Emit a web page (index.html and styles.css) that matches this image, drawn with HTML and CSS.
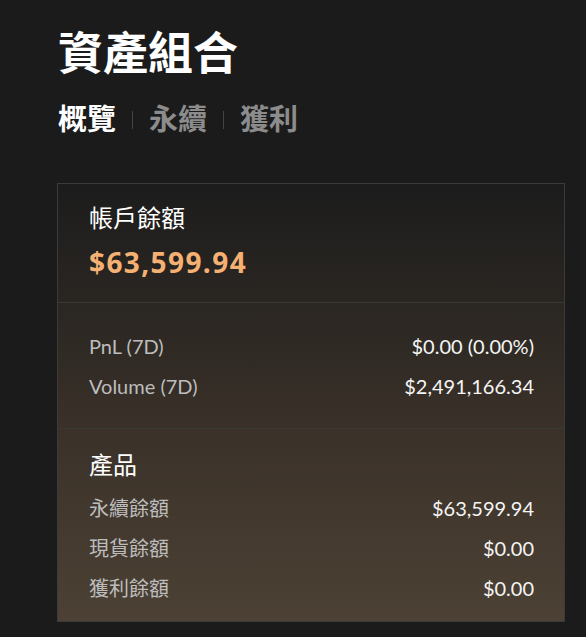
FILE: index.html
```html
<!DOCTYPE html>
<html lang="zh-Hant">
<head>
    <meta charset="UTF-8">
    <meta name="viewport" content="width=device-width, initial-scale=1.0">
    <title>資產組合</title>
    <link rel="stylesheet" href="styles.css">
</head>
<body>
    <div class="page">
        <h1 class="page-title">資產組合</h1>

        <!-- Tabs -->
        <nav class="tabs">
            <a class="tab active" href="#">概覽</a>
            <span class="tab-sep"></span>
            <a class="tab" href="#">永續</a>
            <span class="tab-sep"></span>
            <a class="tab" href="#">獲利</a>
        </nav>

        <!-- Portfolio card -->
        <div class="card">
            <div class="card-section balance">
                <h3 class="section-title">帳戶餘額</h3>
                <div class="balance-amount">$63,599.94</div>
            </div>

            <div class="card-section stats">
                <div class="row">
                    <span class="label">PnL (7D)</span>
                    <span class="value">$0.00 (0.00%)</span>
                </div>
                <div class="row">
                    <span class="label">Volume (7D)</span>
                    <span class="value">$2,491,166.34</span>
                </div>
            </div>

            <div class="card-section products">
                <h3 class="section-title">產品</h3>
                <div class="row">
                    <span class="label">永續餘額</span>
                    <span class="value">$63,599.94</span>
                </div>
                <div class="row">
                    <span class="label">現貨餘額</span>
                    <span class="value">$0.00</span>
                </div>
                <div class="row">
                    <span class="label">獲利餘額</span>
                    <span class="value">$0.00</span>
                </div>
            </div>
        </div>
    </div>
</body>
</html>
```

FILE: styles.css
```css
body {
    margin: 0;
    background-color: #1b1b1b;
    color: #f2f2f2;
    font-family: Lato, "Noto Sans CJK TC", sans-serif;
}
.page {
    padding: 24px 21px 16px 57px;
}
.page-title {
    margin: 0;
    font-size: 45px;
    line-height: 58px;
    font-weight: 700;
    color: #ffffff;
    padding-left: 1px;
}
.tabs {
    display: flex;
    align-items: center;
    margin-top: 19px;
    padding-left: 1px;
}
.tab {
    font-size: 29px;
    line-height: 36px;
    font-weight: 700;
    color: #8c8c8c;
    text-decoration: none;
}
.tab.active {
    color: #ffffff;
}
.tab-sep {
    width: 1px;
    height: 18px;
    margin: 2px 16px 0 16px;
    background-color: #444444;
}
.card {
    margin-top: 46px;
    border: 1px solid #3b3b3b;
    background: linear-gradient(180deg, #1c1c1c 0%, #2a2622 27%, #3a3129 56%, #4c4134 100%);
}
.card-section {
    padding: 0 30px 0 31px;
}
.card-section + .card-section {
    border-top: 1px solid #3a3835;
}
.balance {
    padding-top: 17px;
    padding-bottom: 20px;
}
.section-title {
    margin: 0;
    font-size: 24px;
    line-height: 34px;
    font-weight: 400;
    color: #ffffff;
}
.balance-amount {
    margin-top: 7px;
    font-family: "Open Sans", "Noto Sans CJK TC", sans-serif;
    font-size: 28px;
    line-height: 40px;
    font-weight: 700;
    letter-spacing: 1.4px;
    color: #f5b173;
}
.stats {
    padding-top: 23px;
    padding-bottom: 22px;
}
.products {
    padding-top: 19px;
    padding-bottom: 13px;
}
.products .section-title {
    margin-bottom: 6px;
}
.row {
    display: flex;
    justify-content: space-between;
    font-size: 20px;
    line-height: 40px;
}
.label {
    color: #bdbdbd;
}
.value {
    color: #f5f5f5;
}
```
